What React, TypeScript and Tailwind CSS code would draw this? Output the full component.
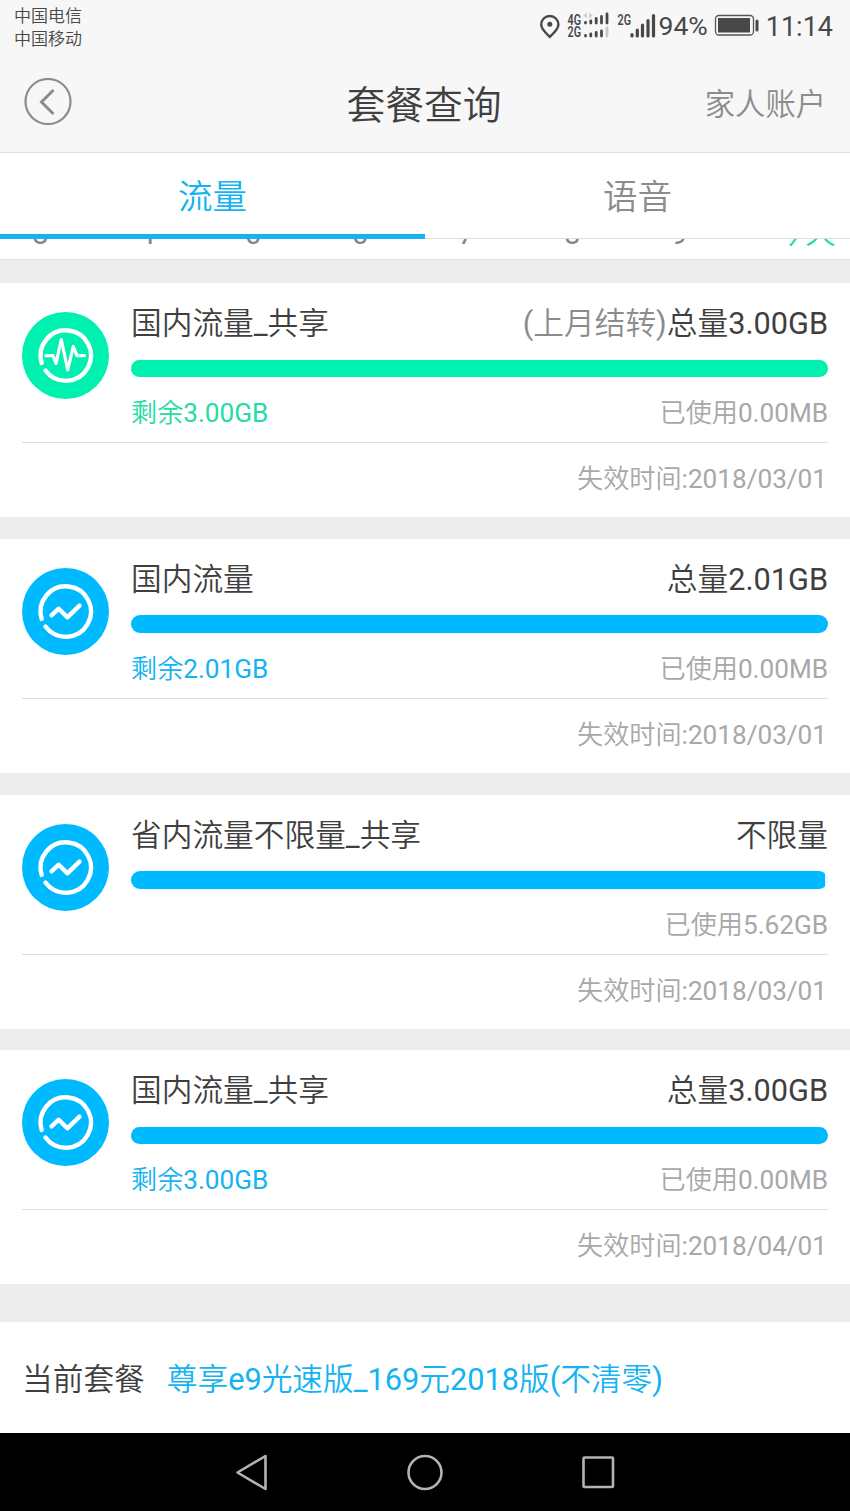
import React from "react";

type Plan = {
  name: string;
  note?: string;
  total: string;
  left?: string;
  used: string;
  expires: string;
  percent: number;
  shared?: boolean;
};

const plans: Plan[] = [
  { name: "国内流量_共享", note: "(上月结转)", total: "总量3.00GB", left: "剩余3.00GB", used: "已使用0.00MB", expires: "2018/03/01", percent: 100, shared: true },
  { name: "国内流量", total: "总量2.01GB", left: "剩余2.01GB", used: "已使用0.00MB", expires: "2018/03/01", percent: 100 },
  { name: "省内流量不限量_共享", total: "不限量", used: "已使用5.62GB", expires: "2018/03/01", percent: 99.5 },
  { name: "国内流量_共享", total: "总量3.00GB", left: "剩余3.00GB", used: "已使用0.00MB", expires: "2018/04/01", percent: 100 },
];

function SignalIcons() {
  return (
    <svg viewBox="538 6 120 40" className="h-10 w-[120px] shrink-0" fill="#484848">
      <path d="M549.800 16a8.600 8.600 0 0 0-8.600 8.600c0 4.900 5.200 9 8.600 12.200 3.400-3.200 8.600-7.300 8.600-12.200A8.600 8.600 0 0 0 549.800 16Z" fill="none" stroke="#484848" strokeWidth="2.400" />
      <circle cx="549.800" cy="24.300" r="2.500" />
      <g fontFamily="Roboto, sans-serif" fontWeight="600" fontSize="14">
        <text x="567.500" y="24.500" textLength="13.500" lengthAdjust="spacingAndGlyphs">4G</text>
        <text x="567.500" y="37.200" textLength="13.500" lengthAdjust="spacingAndGlyphs">2G</text>
        <text x="617.500" y="24.500" textLength="13.500" lengthAdjust="spacingAndGlyphs">2G</text>
      </g>
      <path d="M587 12.500v6l-4-3zM589 12.500v6l4-3z" fill="#cfcfcf" />
      <g stroke="#484848" strokeWidth="2.800" strokeLinecap="round">
        <path d="M585.500 22.500v.5M590.800 21v2M596.200 18.500v4.500M601.500 16.500v6.500M607 14v9" />
        <path d="M585.500 35.500v.5M590.800 34v2M596.200 32.500v3.500M601.500 31v5" />
        <path d="M607 28v8" stroke="#c6c6c6" />
        <path d="M632 34.500v1.500M637.300 30v6M642.500 25v11M648 20.500v15.500M653.500 15.500v20.500" strokeWidth="3.200" />
      </g>
    </svg>
  );
}

function PlanIcon({ shared }: { shared?: boolean }) {
  return (
    <svg viewBox="0 0 87 87" className="mt-[29px] size-[87px] shrink-0" fill="none" stroke="#fff" strokeLinecap="round" strokeLinejoin="round">
      <circle cx="43.500" cy="43.500" r="43.500" fill={shared ? "#00f0b0" : "#00baff"} stroke="none" />
      <path d="M19.700 51A25.200 25.200 0 1 1 23.500 58.500" strokeWidth="4.400" />
      {shared ? (
        <path d="M24 43.700h7l3 7.800 5.300-24 6.400 30.500 5.600-23.500 3.700 9.200h7.500" strokeWidth="3.200" />
      ) : (
        <path d="M29.500 47.300l7.200-6.600 8.600 8.600 12.200-11.600" strokeWidth="4.400" />
      )}
    </svg>
  );
}

function PlanCard({ plan }: { plan: Plan }) {
  const fill = plan.shared ? "bg-[#00f0b0]" : "bg-[#00baff]";
  const tint = plan.shared ? "text-[#24dca4]" : "text-[#14b3f2]";
  return (
    <section className="h-[234px] bg-white px-[22px]">
      <div className="flex h-[159px] gap-[22px]">
        <PlanIcon shared={plan.shared} />
        <div className="min-w-0 flex-1 pt-[23px]">
          <div className="flex h-9 justify-between text-[30.700px] leading-9 text-[#3f3f3f]">
            <span>{plan.name}</span>
            <span>
              {plan.note && <span className="text-[#8c8c8c]">{plan.note}</span>}
              {plan.total}
            </span>
          </div>
          <div className="mt-[17.500px] h-[17.500px] overflow-hidden rounded-full bg-[#e6f5fb]">
            <div className={`h-full rounded-r-[4px] ${fill}`} style={{ width: `${plan.percent}%` }} />
          </div>
          <div className="mt-[21px] flex h-[30px] justify-between text-[26.150px] leading-[31px]">
            <span className={tint}>{plan.left}</span>
            <span className="text-[#a8a8a8]">{plan.used}</span>
          </div>
        </div>
      </div>
      <div className="h-[75px] border-t border-[#dedede] pr-px text-right text-[26.150px] leading-[73px] text-[#a8a8a8]">
        失效时间:{plan.expires}
      </div>
    </section>
  );
}

export default function App() {
  return (
    <div className="flex h-[1511px] w-[850px] flex-col overflow-hidden bg-[#ededed] font-['Roboto','Noto_Sans_CJK_SC_DemiLight','Noto_Sans_CJK_SC',sans-serif] font-normal whitespace-nowrap">
      <header className="h-[153px] shrink-0 border-b border-[#dfdfdf] bg-[#f7f7f7]">
        <div className="flex h-[52px] justify-between pr-[17px] pl-[14px] text-[#484848]">
          <div className="pt-[5px] text-[17px] leading-[23px]">
            <div>中国电信</div>
            <div>中国移动</div>
          </div>
          <div className="flex items-start pt-1.5">
            <SignalIcons />
            <span className="ml-px text-[26.500px] leading-10">94%</span>
            <svg viewBox="0 0 46 24" className="mt-2 ml-1.5 h-6 w-[46px]">
              <rect x="1.500" y="1.500" width="38" height="19.500" rx="3.500" fill="none" stroke="#555" strokeWidth="1.300" />
              <rect x="4" y="4" width="32" height="14.500" fill="#484848" />
              <rect x="41.500" y="5.500" width="3" height="12" rx="1.500" fill="#484848" />
            </svg>
            <span className="ml-1.5 text-[27px] leading-[42px]">11:14</span>
          </div>
        </div>
        <div className="grid h-[100px] grid-cols-[1fr_auto_1fr] items-center pr-6 pl-6">
          <svg viewBox="0 0 48 48" className="size-12" fill="none" stroke="#8c8c8c">
            <circle cx="24" cy="23.500" r="22.500" strokeWidth="2.200" />
            <path d="M29.500 12 17.500 24l12 12" strokeWidth="3" />
          </svg>
          <h1 className="pt-2 pr-0.5 text-[38.800px] leading-[48px] text-[#3f3f3f]">套餐查询</h1>
          <div className="pt-1.5 text-right text-[30.300px] leading-9 text-[#8c8c8c]">家人账户</div>
        </div>
      </header>

      <nav className="grid h-[86px] shrink-0 grid-cols-2 bg-white text-center text-[34.500px] leading-[89px]">
        <div className="h-[86px] border-b-[5px] border-[#14b3f2] text-[#14b3f2]">流量</div>
        <div className="h-[86px] border-b border-[#dedede] text-[#8c8c8c]">语音</div>
      </nav>

      <div className="flex h-[21px] shrink-0 items-end overflow-hidden border-b border-[#dedede] bg-white pl-8 text-[29.500px] leading-9 text-[#858585]">
        <div className="mb-[7px] flex">
          <span className="w-[109px]">8</span>
          <span className="w-[104px]">1</span>
          <span className="w-[107px]">0</span>
          <span className="w-[106px]">0</span>
          <span className="w-[106px]">7</span>
          <span className="w-[107px]">8</span>
          <span className="w-[104px]">9</span>
        </div>
        <span className="mb-[8px] text-[30.300px] text-[#24dca4]">今天</span>
      </div>

      <main className="mt-[23px] flex shrink-0 flex-col gap-[21.750px]">
        {plans.map((plan, i) => (
          <PlanCard key={i} plan={plan} />
        ))}
      </main>

      <footer className="mt-[38px] flex h-[111px] shrink-0 items-center gap-[22px] bg-white px-[22px] pt-[5px] text-[30.700px] text-[#3f3f3f]">
        <span>当前套餐</span>
        <span className="text-[#14b3f2]">尊享e9光速版_169元2018版(不清零)</span>
      </footer>

      <div className="flex flex-1 items-center bg-black pl-[233px]">
        <svg viewBox="0 0 390 40" className="h-10 w-[390px]" fill="none" stroke="#b3b3b3" strokeWidth="2.600" strokeLinejoin="round">
          <path d="M32.500 4v33L4.500 20.500z" />
          <circle cx="192" cy="20.500" r="16.500" />
          <rect x="350.500" y="5.500" width="29.500" height="29.500" rx="1" />
        </svg>
      </div>
    </div>
  );
}
